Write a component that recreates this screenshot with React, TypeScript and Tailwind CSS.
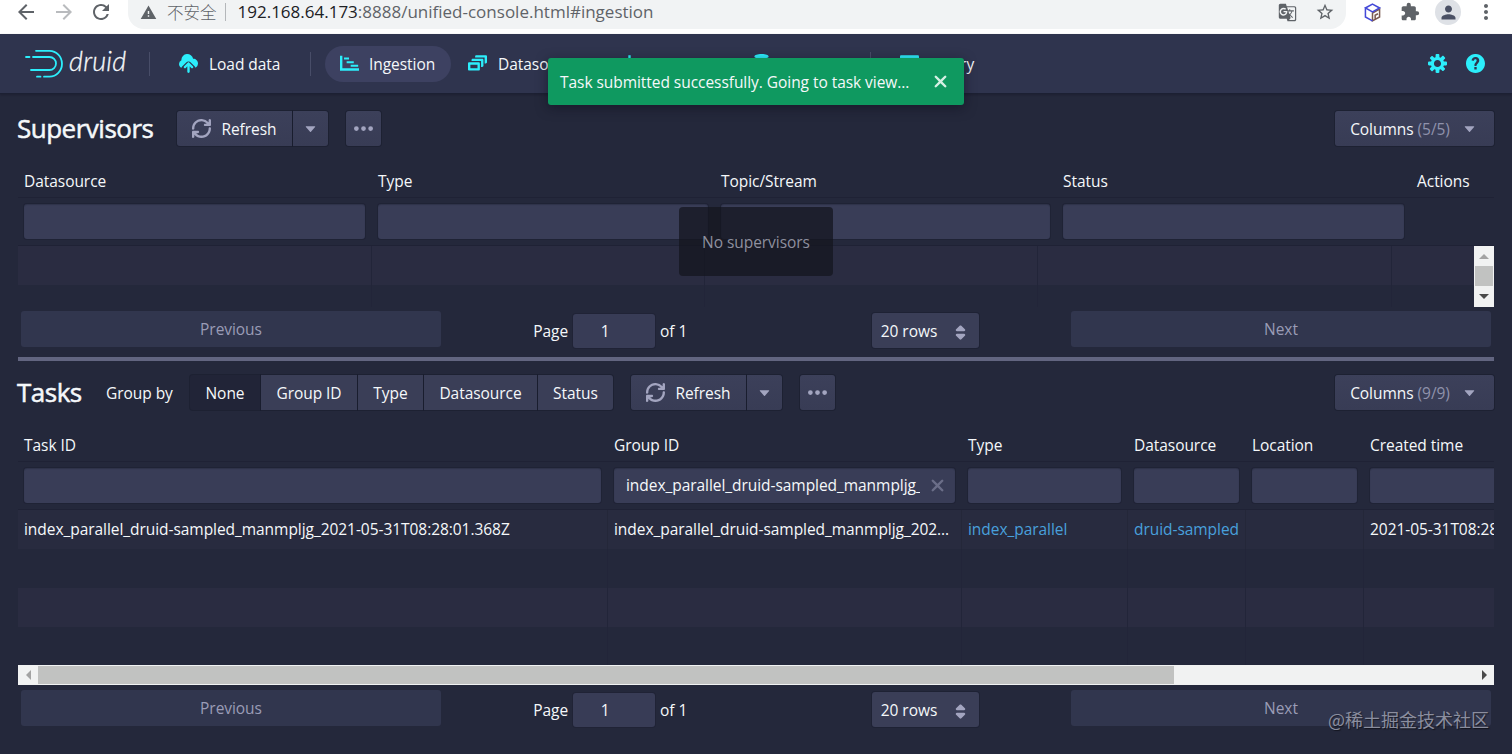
import React from 'react';
import {
  MdArrowBack,
  MdArrowForward,
  MdExtension,
  MdGTranslate,
  MdMoreVert,
  MdPerson,
  MdRefresh,
  MdStarBorder,
  MdWarning,
} from 'react-icons/md';

const ICONS = {
  refresh:
    'M14.99 6.99c-.55 0-1 .45-1 1 0 3.31-2.69 6-6 6-1.77 0-3.36-.78-4.46-2h1.46c.55 0 1-.45 1-1s-.45-1-1-1h-4c-.55 0-1 .45-1 1v4c0 .55.45 1 1 1s1-.45 1-1v-1.74a7.95 7.95 0 006 2.74c4.42 0 8-3.58 8-8 0-.55-.45-1-1-1zm0-7c-.55 0-1 .45-1 1v1.74a7.95 7.95 0 00-6-2.74c-4.42 0-8 3.58-8 8 0 .55.45 1 1 1s1-.45 1-1c0-3.31 2.69-6 6-6 1.77 0 3.36.78 4.46 2h-1.46c-.55 0-1 .45-1 1s.45 1 1 1h4c.55 0 1-.45 1-1v-4c0-.55-.45-1-1-1z',
  caretDown:
    'M12 6.5c0-.28-.22-.5-.5-.5h-7a.495.495 0 00-.37.83l3.5 4c.09.1.22.17.37.17s.28-.07.37-.17l3.5-4c.08-.09.13-.2.13-.33z',
  doubleCaret:
    'M5 7h6a1.003 1.003 0 00.71-1.71l-3-3C8.53 2.11 8.28 2 8 2s-.53.11-.71.29l-3 3A1.003 1.003 0 005 7zm6 2H5a1.003 1.003 0 00-.71 1.71l3 3c.18.18.43.29.71.29s.53-.11.71-.29l3-3A1.003 1.003 0 0011 9z',
  more: 'M2 6a2 2 0 100 4 2 2 0 100-4zM8 6a2 2 0 100 4 2 2 0 100-4zM14 6a2 2 0 100 4 2 2 0 100-4z',
  cross:
    'M9.41 8l3.29-3.29c.19-.18.3-.43.3-.71a1.003 1.003 0 00-1.71-.71L8 6.59l-3.29-3.3a1.003 1.003 0 00-1.42 1.42L6.59 8 3.3 11.29c-.19.18-.3.43-.3.71a1.003 1.003 0 001.71.71L8 9.41l3.29 3.29c.18.19.43.3.71.3a1.003 1.003 0 00.71-1.71L9.41 8z',
  upload:
    'M8.71 7.29C8.53 7.11 8.28 7 8 7s-.53.11-.71.29l-3 3a1.003 1.003 0 001.42 1.42L7 10.41V15c0 .55.45 1 1 1s1-.45 1-1v-4.59l1.29 1.3a1.003 1.003 0 001.42-1.42l-3-3zM12 4c-.03 0-.07 0-.1.01A5 5 0 002 5c0 .11.01.22.02.33A3.51 3.51 0 000 8.5c0 1.41.84 2.61 2.03 3.17.17-.49.44-.95.83-1.35l3.02-3A3 3 0 018 6.4a3 3 0 012.12.88l3 3c.38.38.65.83.82 1.32A4 4 0 0016 8c0-2.21-1.79-4-4-4z',
  gantt: 'M0 1.5h2V12h14v2.2H0zM3.4 3h4.2v1.7H3.4zM5.6 6h6v1.7h-6zM9 9h6.3v1.7H9z',
  datasources:
    'M12 3.98H4c-.55 0-1 .45-1 1v1h8v5h1c.55 0 1-.45 1-1v-5c0-.55-.45-1-1-1zm3-3H7c-.55 0-1 .45-1 1v1h8v5h1c.55 0 1-.45 1-1v-5c0-.55-.45-1-1-1zm-6 6H1c-.55 0-1 .45-1 1v5c0 .55.45 1 1 1h8c.55 0 1-.45 1-1v-5c0-.55-.45-1-1-1zm-1 5H2v-3h6v3z',
  segments: 'M7 1h2v4H7zM3 5h2v4H3zM11 4h2v4h-2zM0 13h16v2H0z',
  services: 'M8 0C4.7 0 2 .9 2 2s2.7 2 6 2 6-.9 6-2-2.7-2-6-2zM2 4v10c0 1.1 2.7 2 6 2s6-.9 6-2V4c-1 1-12 1-12 0z',
  query: 'M1 1h14c.55 0 1 .45 1 1v12c0 .55-.45 1-1 1H1c-.55 0-1-.45-1-1V2c0-.55.45-1 1-1z',
  cog: 'M15.19 6.39h-1.85c-.11-.37-.27-.71-.45-1.04l1.36-1.36c.31-.31.31-.82 0-1.13l-1.13-1.13c-.31-.31-.82-.31-1.13 0l-1.36 1.36c-.33-.17-.67-.33-1.04-.44V.79c0-.44-.36-.8-.8-.8h-1.6c-.44 0-.8.36-.8.8v1.86c-.39.12-.75.28-1.1.47l-1.3-1.3c-.3-.3-.79-.3-1.09 0L1.82 2.91c-.3.3-.3.79 0 1.09l1.3 1.3c-.2.34-.36.7-.48 1.09H.79c-.44 0-.8.36-.8.8v1.6c0 .44.36.8.8.8h1.85c.11.37.27.71.45 1.04l-1.36 1.36c-.31.31-.31.82 0 1.13l1.13 1.13c.31.31.82.31 1.13 0l1.36-1.36c.33.18.67.33 1.04.44v1.86c0 .44.36.8.8.8h1.6c.44 0 .8-.36.8-.8v-1.86c.39-.12.75-.28 1.1-.47l1.3 1.3c.3.3.79.3 1.09 0l1.09-1.09c.3-.3.3-.79 0-1.09l-1.3-1.3c.19-.35.36-.71.48-1.1h1.85c.44 0 .8-.36.8-.8v-1.6a.816.816 0 00-.81-.79zm-7.2 4.6c-1.66 0-3-1.34-3-3s1.34-3 3-3 3 1.34 3 3-1.34 3-3 3z',
  help: 'M7.99-.01c-4.42 0-8 3.58-8 8s3.58 8 8 8 8-3.58 8-8-3.58-8-8-8zM9 13H7v-2h2v2zm1.93-6.48c-.14.32-.35.64-.62.97L9.25 8.83c-.12.15-.24.29-.28.42-.04.13-.09.3-.09.52V10H7.12V8.88s.05-.51.21-.71L8.4 6.73c.22-.26.35-.49.44-.68.09-.19.12-.38.12-.58 0-.3-.1-.55-.28-.75-.18-.19-.44-.28-.76-.28-.33 0-.59.1-.78.29-.19.19-.33.46-.4.81-.03.11-.1.15-.2.14l-1.7-.25c-.12-.01-.16-.08-.14-.19.12-.82.46-1.47 1.03-1.94.57-.48 1.32-.72 2.25-.72.47 0 .9.07 1.29.22s.72.34 1 .59c.28.25.49.55.65.89.15.35.22.72.22 1.12s-.07.75-.21 1.08z',
};

interface IconProps {
  name: keyof typeof ICONS;
  className?: string;
}

const Icon: React.FC<IconProps> = ({ name, className = '' }) => (
  <svg viewBox="0 0 16 16" className={`size-[19px] shrink-0 fill-current ${className}`}>
    <path d={ICONS[name]} fillRule="evenodd" />
  </svg>
);

const BrowserBar = () => (
  <div className="flex h-[34px] shrink-0 items-start bg-white tracking-normal text-[#5f6368]">
    <div className="flex h-6 items-center">
      <MdArrowBack className="ml-[14px] size-6" />
      <MdArrowForward className="ml-[14px] size-6 text-[#b9bbbe]" />
      <MdRefresh className="ml-[13px] size-6" />
    </div>
    <div className="ml-[15px] flex h-[29px] w-[1218px] items-start rounded-b-[16px] bg-[#f1f3f4]">
      <div className="flex h-6 w-full items-center">
        <MdWarning className="ml-3 size-[17px]" />
        <span className="ml-[10px] font-['Noto_Sans_CJK_SC',sans-serif] text-[16.5px] font-light">不安全</span>
        <span className="ml-2 h-[18px] w-px bg-[#b4b7ba]" />
        <span className="ml-3 text-[17px] whitespace-nowrap">
          <span className="text-[#202124]">192.168.64.173</span>:8888/unified-console.html#ingestion
        </span>
        <MdGTranslate className="mr-[18px] ml-auto size-[19px]" />
        <MdStarBorder className="mr-[11px] size-5" />
      </div>
    </div>
    <div className="flex h-6 items-center">
      <svg viewBox="0 0 18 20" className="ml-[18px] h-[19px] w-[17px] fill-none stroke-[1.6]">
        <path d="M9 18.8V10.5l7.5-4V14.8z M11.8 16.5v-3.6l3-1.6" stroke="#7a5a50" />
        <path d="M9 1.2L16.5 5.2 9 9.4 1.5 5.2z M1.5 6v8.8L9 18.8" stroke="#4449d8" />
      </svg>
      <MdExtension className="ml-[19px] size-5" />
      <span className="ml-[15px] flex size-[26px] items-center justify-center rounded-full bg-[#dee1e6]">
        <MdPerson className="size-[21px] text-[#4a5064]" />
      </span>
      <MdMoreVert className="ml-[13px] size-6" />
    </div>
  </div>
);

const DruidLogo = () => (
  <div className="flex items-start">
    <svg viewBox="0 0 39 30" className="h-[30px] w-[39px] fill-none stroke-[#2ceefb] stroke-[1.8]" strokeLinecap="round">
      <path d="M12 1.8h13.5a12.5 12.95 0 010 25.9H20" />
      <path d="M2 8h3.5M9 8h16.5a6.5 6.5 0 010 13H7" />
      <path d="M13 27.7h3.5" />
    </svg>
    <span className="-mt-[3px] ml-[6px] font-['Lato',sans-serif] text-[27px] leading-[30px] font-light tracking-[0.2px] italic [-webkit-text-stroke:0.3px_#f5f8fa]">
      druid
    </span>
  </div>
);

const Divider = () => <span className="h-6 w-px bg-[#484d68]" />;

interface NavItemProps extends IconProps {
  label: string;
  active?: boolean;
}

const NavItem: React.FC<NavItemProps> = ({ name, label, active, className = '' }) => (
  <div className={`flex h-9 items-center gap-[11px] rounded-full px-[15px] ${active ? 'bg-[#3d4161]' : ''} ${className}`}>
    <Icon name={name} className="text-[#2ceefb]" />
    <span className={active ? '-ml-px' : ''}>{label}</span>
  </div>
);

const HeaderBar = () => (
  <div className="flex h-[60px] shrink-0 items-center border-b border-[#1c2033] bg-[#2f344e] pl-6 shadow-[0_1px_2px_rgba(16,18,32,0.35)]">
    <div className="flex w-[125px] items-center">
      <DruidLogo />
    </div>
    <Divider />
    <NavItem name="upload" label="Load data" className="ml-[14px] w-[146px]" />
    <Divider />
    <NavItem name="gantt" label="Ingestion" active className="ml-[14px] w-[126px]" />
    <NavItem name="datasources" label="Datasources" className="ml-[2px] w-[150px]" />
    <NavItem name="segments" label="Segments" className="ml-[2px] w-[130px]" />
    <NavItem name="services" label="Services" className="ml-[2px] w-[133px]" />
    <Divider />
    <NavItem name="query" label="Query" className="ml-[14px]" />
    <Icon name="cog" className="mr-[19px] ml-auto text-[#2ceefb]" />
    <Icon name="help" className="mr-[27px] text-[#2ceefb]" />
  </div>
);

const buttonStyle =
  'flex h-[35px] items-center justify-center bg-linear-to-b from-[#3c405a] to-[#383c55] shadow-[0_0_0_1px_rgba(22,25,42,0.5)]';

const RefreshButton = () => (
  <div className="flex gap-px">
    <div className={`${buttonStyle} w-[115px] gap-[10px] rounded-l-[3px]`}>
      <Icon name="refresh" className="text-[#a3a5c0]" />
      <span>Refresh</span>
    </div>
    <div className={`${buttonStyle} w-[35px] rounded-r-[3px]`}>
      <Icon name="caretDown" className="text-[#a3a5c0]" />
    </div>
  </div>
);

const MoreButton = () => (
  <div className={`${buttonStyle} ml-[18px] w-[35px] rounded-[3px]`}>
    <Icon name="more" className="text-[#a3a5c0]" />
  </div>
);

const ColumnsButton = ({ count }: { count: string }) => (
  <div className={`${buttonStyle} ml-auto w-[159px] rounded-[3px]`}>
    <span>Columns</span>
    <span className="ml-1 text-[#8f92ac]">({count})</span>
    <Icon name="caretDown" className="ml-[10px] text-[#a3a5c0]" />
  </div>
);

const GROUPS = [
  { label: 'None', width: 'w-[70px]', active: true },
  { label: 'Group ID', width: 'w-[96px]' },
  { label: 'Type', width: 'w-[65px]' },
  { label: 'Datasource', width: 'w-[113px]' },
  { label: 'Status', width: 'w-[75px]' },
];

const Pagination = () => (
  <div className="flex h-9 items-start px-[3px]">
    <div className="flex h-9 w-[420px] items-center justify-center rounded-[3px] bg-[#31364e] text-[#9a9cb6]">Previous</div>
    <div className="mt-[3px] flex flex-1 items-center justify-around">
      <div className="flex items-center">
        <span>Page</span>
        <span className="mx-[5px] flex h-[34px] w-[82px] items-center justify-center rounded-[3px] bg-[#383c56] pr-[18px] shadow-[0_0_0_1px_rgba(22,25,42,0.3)]">
          1
        </span>
        <span>of 1</span>
      </div>
      <div className="-mt-px flex h-[35px] w-[107px] items-center justify-between rounded-[3px] bg-[#3a3e57] pr-[9px] pl-[9px] shadow-[0_0_0_1px_rgba(22,25,42,0.4)]">
        <span>20 rows</span>
        <Icon name="doubleCaret" className="mt-[3px] text-[#a3a5c0]" />
      </div>
    </div>
    <div className="flex h-9 w-[420px] items-center justify-center rounded-[3px] bg-[#31364e] text-[#9a9cb6]">Next</div>
  </div>
);

const FilterInput = ({ value }: { value?: string }) => (
  <div className="flex h-[35px] items-center rounded-[3px] bg-[#393d57] pl-3 shadow-[0_0_0_1px_rgba(22,25,42,0.35),inset_0_1px_1px_rgba(22,25,42,0.3)]">
    {value && (
      <>
        <span className="w-[294px] shrink-0 overflow-hidden pb-px whitespace-nowrap">{value}</span>
        <Icon name="cross" className="ml-2 text-[#6b6e88]" />
      </>
    )}
  </div>
);

const SUPERVISOR_COLUMNS = ['Datasource', 'Type', 'Topic/Stream', 'Status', 'Actions'];

const SupervisorsTable = () => (
  <div className="relative mt-[17px]">
    <div className="grid h-[34px] grid-cols-[354px_343px_342px_354px_1fr] items-center border-b border-[#1f2235]">
      {SUPERVISOR_COLUMNS.map(col => (
        <div key={col} className="pl-[6px]">{col}</div>
      ))}
    </div>
    <div className="grid h-12 grid-cols-[354px_343px_342px_354px_1fr] items-center border-b border-[#1f2235]">
      {SUPERVISOR_COLUMNS.slice(0, 4).map(col => (
        <div key={col} className="pr-[7px] pl-[6px]">
          <FilterInput />
        </div>
      ))}
    </div>
    <div className="flex h-[61px]">
      <div className="flex-1">
        {['h-[39px] bg-[#2a2c41]', 'h-[22px]'].map(row => (
          <div key={row} className={`grid grid-cols-[354px_333px_333px_354px_1fr] ${row}`}>
            {SUPERVISOR_COLUMNS.map(col => (
              <div key={col} className="border-r border-[#222539] last:border-r-0" />
            ))}
          </div>
        ))}
      </div>
      <div className="flex w-5 flex-col items-center bg-[#f1f2f2]">
        <span className="flex h-5 items-center text-[#a3a3a3]">
          <svg viewBox="0 0 10 5" className="h-[5px] w-[10px] fill-current"><path d="M0 5l5-5 5 5z" /></svg>
        </span>
        <span className="h-5 w-[18px] bg-[#c1c2c1]" />
        <span className="flex h-5 items-center text-[#4a4a4a]">
          <svg viewBox="0 0 10 5" className="h-[5px] w-[10px] fill-current"><path d="M0 0l5 5 5-5z" /></svg>
        </span>
      </div>
    </div>
    <div className="absolute top-[43px] left-[661px] flex h-[69px] w-[154px] items-center justify-center rounded-[4px] bg-[#14161f]/75 text-[#8e909f]">
      No supervisors
    </div>
  </div>
);

const TASK_COLUMNS = ['Task ID', 'Group ID', 'Type', 'Datasource', 'Location', 'Created time'];
const TASK_ROW = [
  { text: 'index_parallel_druid-sampled_manmpljg_2021-05-31T08:28:01.368Z' },
  { text: 'index_parallel_druid-sampled_manmpljg_2021-05-31T08:28:01.368Z' },
  { text: 'index_parallel', link: true },
  { text: 'druid-sampled', link: true },
  { text: '' },
  { text: '2021-05-31T08:28:01.370Z', clip: true },
];
const TASK_GRID = 'grid grid-cols-[590px_354px_166px_118px_118px_200px]';

const TasksTable = () => (
  <div className="mt-[17px]">
    <div className="h-[237px] overflow-hidden">
      <div className={`${TASK_GRID} h-[34px] items-center border-b border-[#1f2235]`}>
        {TASK_COLUMNS.map(col => (
          <div key={col} className="pl-[6px]">{col}</div>
        ))}
      </div>
      <div className={`${TASK_GRID} h-12 items-center border-b border-[#1f2235]`}>
        {TASK_COLUMNS.map(col => (
          <div key={col} className="pr-[7px] pl-[6px]">
            <FilterInput value={col === 'Group ID' ? 'index_parallel_druid-sampled_manmpljg_' : undefined} />
          </div>
        ))}
      </div>
      <div className={`${TASK_GRID} h-[39px] items-center bg-[#282b3f]`}>
        {TASK_ROW.map((cell, i) => (
          <div
            key={i}
            className={`flex h-full items-center border-r border-[#242739] pb-[2px] pl-[6px] ${cell.link ? 'text-[#48a0dc]' : 'pr-[6px]'}`}
          >
            <span className={cell.clip || cell.link ? 'whitespace-nowrap' : 'truncate'}>{cell.text}</span>
          </div>
        ))}
      </div>
      {['h-[39px]', 'h-[39px] bg-[#2a2c41]', 'h-[38px]'].map((row, i) => (
        <div key={i} className={`${TASK_GRID} ${row}`}>
          {TASK_COLUMNS.map(col => (
            <div key={col} className="border-r border-[#222539]" />
          ))}
        </div>
      ))}
    </div>
    <div className="flex h-5 items-center bg-[#f1f2f2]">
      <span className="flex w-5 justify-center text-[#a3a3a3]">
        <svg viewBox="0 0 5 10" className="h-[10px] w-[5px] fill-current"><path d="M5 0L0 5l5 5z" /></svg>
      </span>
      <span className="h-[18px] w-[1136px] bg-[#c1c2c1]" />
      <span className="ml-auto flex w-5 justify-center text-[#4a4a4a]">
        <svg viewBox="0 0 5 10" className="h-[10px] w-[5px] fill-current"><path d="M0 0l5 5-5 5z" /></svg>
      </span>
    </div>
  </div>
);

const Toast = () => (
  <div className="absolute top-[58px] left-[548px] flex h-[47px] w-[416px] items-center justify-between rounded-[3px] bg-[#0f9960] pr-[14px] pl-3 shadow-[0_3px_12px_rgba(12,14,28,0.5)]">
    <span className="whitespace-nowrap">Task submitted successfully. Going to task view...</span>
    <Icon name="cross" className="text-[#d5f0e4]" />
  </div>
);

const ViewTitle = ({ text, className }: { text: string; className: string }) => (
  <h1 className={`-ml-px text-[26px] leading-[35px] font-medium tracking-[-0.5px] [-webkit-text-stroke:0.5px_#f5f8fa] ${className}`}>
    {text}
  </h1>
);

export default function App() {
  return (
    <div className="relative flex h-[754px] w-[1512px] flex-col overflow-hidden bg-[#24283b] font-['Open_Sans',sans-serif] text-[15.5px] leading-6 tracking-[-0.05px] text-[#f5f8fa]">
      <BrowserBar />
      <HeaderBar />
      <div className="px-[18px]">
        <div className="mt-[17px] flex h-9 items-start">
          <ViewTitle text="Supervisors" className="w-[160px]" />
          <RefreshButton />
          <MoreButton />
          <ColumnsButton count="5/5" />
        </div>
        <SupervisorsTable />
        <div className="mt-1">
          <Pagination />
        </div>
        <div className="mt-[10px] h-1 bg-[#626580]" />
        <div className="mt-[14px] flex h-9 items-start">
          <ViewTitle text="Tasks" className="w-[89px]" />
          <span className="w-[84px] leading-9">Group by</span>
          <div className="mr-[18px] flex gap-px">
            {GROUPS.map(group => (
              <div
                key={group.label}
                className={`${group.width} flex h-[35px] items-center justify-center shadow-[0_0_0_1px_rgba(22,25,42,0.5)] first:rounded-l-[3px] last:rounded-r-[3px] ${
                  group.active ? 'bg-[#212437]' : 'bg-[#3a3e57]'
                }`}
              >
                {group.label}
              </div>
            ))}
          </div>
          <RefreshButton />
          <MoreButton />
          <ColumnsButton count="9/9" />
        </div>
        <TasksTable />
        <div className="mt-[5px]">
          <Pagination />
        </div>
      </div>
      <Toast />
      <div className="absolute right-[23px] bottom-[23px] font-['Noto_Sans_CJK_SC',sans-serif] text-[18px] tracking-normal text-[#8b8e9f] [text-shadow:1px_1px_1px_rgba(0,0,0,0.5)]">
        @稀土掘金技术社区
      </div>
    </div>
  );
}
